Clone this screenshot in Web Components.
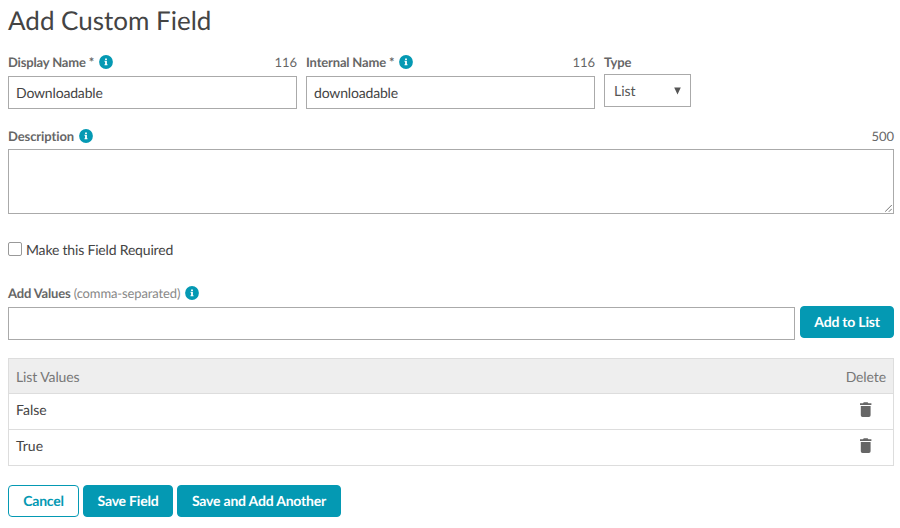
<!DOCTYPE html>
<html lang="en">
<head>
<meta charset="utf-8">
<title>Add Custom Field</title>
<style>
  body { margin: 0; background: #fff; font-family: Lato, "Liberation Sans", sans-serif; color: #444; text-rendering: geometricPrecision; }
</style>
</head>
<body>
<custom-field-form></custom-field-form>
<script>
const define = (name, html) => {
  const template = document.createElement('template');
  template.innerHTML = html;
  customElements.define(name, class extends HTMLElement {
    constructor() {
      super();
      this.attachShadow({ mode: 'open' }).append(template.content.cloneNode(true));
    }
  });
};

define('info-icon', `
  <style>:host { display: block; width: 14px; height: 14px; white-space: normal; } svg { display: block; }</style>
  <svg width="14" height="14" viewBox="0 0 14 14" aria-hidden="true">
    <circle cx="7" cy="7" r="6.9" fill="#0499b3"/>
    <path fill="#fff" d="M6.1 3.5h1.8v1.5H6.1zM5.5 5.8H7.9v3.5h.6v1H5.5v-1h.6V6.8h-.6z"/>
  </svg>`);

define('trash-icon', `
  <style>:host { display: block; width: 12px; height: 16px; } svg { display: block; }</style>
  <svg width="12" height="16" viewBox="0 0 12 16" aria-hidden="true">
    <path fill="#666" d="M0 1.2h3L3.8.3h3.8l.8.9h3v1.7H0zM.8 4h9.8v9.3q0 1.7-1.7 1.7H2.5Q.8 15 .8 13.3z"/>
  </svg>`);

define('field-label', `
  <style>
    :host { display: flex; align-items: center; height: 16px; font-size: 13px; line-height: 16px; color: #666; white-space: pre; }
    b { font-weight: 700; letter-spacing: var(--tracking, -.17px); }
    ::slotted(info-icon) { margin-left: 5px; }
    .count { margin-left: auto; }
  </style>
  <b><slot></slot></b><slot name="hint"></slot><slot name="icon"></slot><span class="count"><slot name="count"></slot></span>`);

define('text-box', `
  <style>
    :host { display: flex; align-items: center; box-sizing: border-box; height: 33px; padding: 0 7px; border: 1px solid #aaa; background: #fff; font-size: 14px; line-height: 18px; letter-spacing: -.17px; color: #444; }
  </style>
  <slot></slot>`);

define('select-box', `
  <style>
    :host { display: flex; align-items: center; justify-content: space-between; box-sizing: border-box; width: 87px; height: 33px; padding: 0 9px; border: 1px solid #aaa; font-size: 14px; line-height: 18px; color: #555; }
    svg { display: block; }
  </style>
  <slot></slot><svg width="7" height="8" viewBox="0 0 7 8" aria-hidden="true"><path fill="#555" d="M.2.5h6.6L3.5 7.5z"/></svg>`);

define('text-area', `
  <style>
    :host { display: flex; align-items: flex-end; justify-content: flex-end; box-sizing: border-box; height: 65px; border: 1px solid #aaa; }
    svg { display: block; margin: 0 1px 1px 0; }
  </style>
  <svg width="7" height="7" viewBox="0 0 7 7" aria-hidden="true"><path d="M0 6.8 6.8 0M3.8 6.8 6.8 3.8" stroke="#666" stroke-width=".9"/></svg>`);

define('check-box', `
  <style>
    :host { display: flex; align-items: center; gap: 4px; height: 18px; font-size: 14px; line-height: 18px; letter-spacing: -.18px; }
    i { box-sizing: border-box; width: 14px; height: 14px; margin-bottom: 2px; border: 1px solid #999; border-radius: 2px; }
  </style>
  <i></i><span><slot></slot></span>`);

define('action-button', `
  <style>
    :host { display: flex; align-items: center; justify-content: center; box-sizing: border-box; height: 32px; width: var(--w); border: 1px solid #0499b3; border-radius: 4px; background: #0499b3; color: #fff; font-size: 14px; line-height: 18px; letter-spacing: -.2px; font-weight: 700; white-space: nowrap; }
    :host([outline]) { background: #fff; color: #0499b3; }
  </style>
  <slot></slot>`);

define('list-row', `
  <style>
    :host { display: flex; justify-content: space-between; align-items: center; box-sizing: border-box; height: 36px; padding: 0 21px 3px 7px; border-top: 1px solid #ddd; font-size: 14px; line-height: 18px; }
    :host([head]) { border-top: 0; height: 34px; padding: 2px 7px 0; background: #eee; color: #777; letter-spacing: -.1px; }
  </style>
  <slot></slot>`);

define('list-table', `
  <style>:host { display: block; border: 1px solid #ddd; }</style>
  <slot></slot>`);

define('custom-field-form', `
  <style>
    :host { display: block; box-sizing: border-box; height: 528px; padding: 3px 6px 0 8px; }
    h1 { margin: 0; font-size: 26px; line-height: 34px; font-weight: 400; }
    .names { display: grid; grid-template-columns: 289px 289px 87px; column-gap: 9px; margin-top: 17px; }
    .names text-box { margin-top: 6px; }
    .names select-box { margin-top: 4px; }
    .description { --tracking: -.1px; margin-top: 19px; }
    text-area { margin-top: 5px; }
    check-box { margin-top: 27px; }
    .values { margin-top: 26px; }
    .add { display: flex; gap: 5px; margin-top: 5px; }
    .add text-box { flex: 1; margin-top: 1px; }
    list-table { margin-top: 18px; }
    .actions { display: flex; gap: 4px; margin-top: 19px; }
    .hint { color: #888; letter-spacing: -.12px; }
  </style>
  <h1>Add Custom Field</h1>
  <div class="names">
    <div><field-label>Display Name *<info-icon slot="icon"></info-icon><span slot="count">116</span></field-label><text-box>Downloadable</text-box></div>
    <div><field-label>Internal Name *<info-icon slot="icon"></info-icon><span slot="count">116</span></field-label><text-box>downloadable</text-box></div>
    <div><field-label>Type</field-label><select-box>List</select-box></div>
  </div>
  <field-label class="description">Description<info-icon slot="icon"></info-icon><span slot="count">500</span></field-label>
  <text-area></text-area>
  <check-box>Make this Field Required</check-box>
  <field-label class="values">Add Values<span class="hint" slot="hint"> (comma-separated)</span><info-icon slot="icon"></info-icon></field-label>
  <div class="add"><text-box></text-box><action-button style="--w:94px">Add to List</action-button></div>
  <list-table>
    <list-row head><span>List Values</span><span>Delete</span></list-row>
    <list-row><span>False</span><trash-icon></trash-icon></list-row>
    <list-row><span>True</span><trash-icon></trash-icon></list-row>
  </list-table>
  <div class="actions">
    <action-button outline style="--w:71px">Cancel</action-button>
    <action-button style="--w:90px">Save Field</action-button>
    <action-button style="--w:164px">Save and Add Another</action-button>
  </div>`);
</script>
</body>
</html>
